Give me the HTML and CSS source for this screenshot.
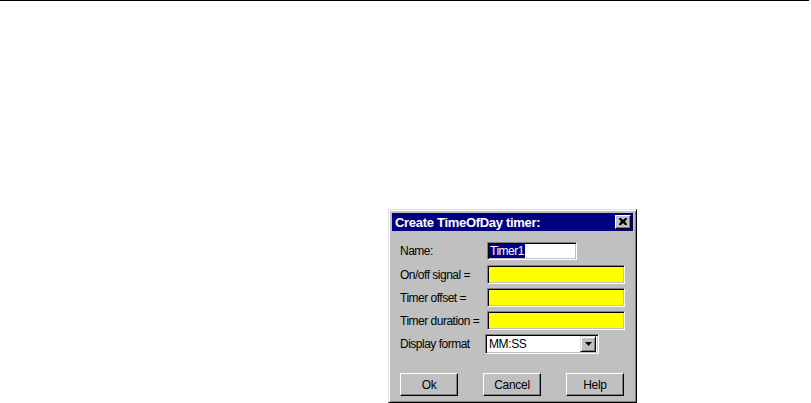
FILE: index.html
```html
<!DOCTYPE html>
<html>
<head>
<meta charset="utf-8">
<link rel="stylesheet" href="styles.css">
</head>
<body>
<div class="topline"></div>
<div class="dialog">
  <div class="titlebar">
    <span class="title">Create TimeOfDay timer:</span>
    <span class="close">
      <svg width="8" height="7" viewBox="0 0 8 7"><path d="M0 0h2l2 2 2-2h2v1L6 3.5 8 6v1H6L4 5 2 7H0V6l2-2.5L0 1z" fill="#000"/></svg>
    </span>
  </div>
  <div class="form">
    <div class="row row-name">
      <span class="label">Name:</span>
      <span class="field name-field"><span class="sel">Timer1</span></span>
    </div>
    <div class="row">
      <span class="label">On/off signal =</span>
      <span class="field yellow"></span>
    </div>
    <div class="row">
      <span class="label">Timer offset =</span>
      <span class="field yellow"></span>
    </div>
    <div class="row">
      <span class="label">Timer duration =</span>
      <span class="field yellow"></span>
    </div>
    <div class="row row-select">
      <span class="label">Display format</span>
      <span class="field select">
        <span class="select-text">MM:SS</span>
        <span class="drop">
          <svg width="7" height="4" viewBox="0 0 7 4"><path d="M0 0h7L3.5 4z" fill="#000"/></svg>
        </span>
      </span>
    </div>
  </div>
  <div class="buttons">
    <span class="btn">Ok</span>
    <span class="btn">Cancel</span>
    <span class="btn">Help</span>
  </div>
</div>
</body>
</html>
```

FILE: styles.css
```css
html, body {
  margin: 0;
  padding: 0;
  background: #fff;
}
body {
  font-family: "Liberation Sans", Arial, sans-serif;
  width: 811px;
  height: 403px;
  overflow: hidden;
}
.topline {
  width: 809px;
  height: 1px;
  background: #000;
}
.dialog {
  box-sizing: border-box;
  margin-left: 388px;
  margin-top: 208px;
  width: 249px;
  height: 194px;
  background: #c0c0c0;
  border: 1px solid;
  border-color: #dfdfdf #000 #000 #dfdfdf;
  box-shadow: inset 1px 1px #fff, inset -1px -1px #808080;
  padding: 3px;
  display: flex;
  flex-direction: column;
}
.titlebar {
  height: 18px;
  background: #000080;
  color: #fff;
  display: flex;
  align-items: center;
  justify-content: space-between;
  padding: 0 2px 0 3px;
}
.title {
  font-weight: bold;
  font-size: 13px;
  letter-spacing: -0.3px;
}
.close {
  box-sizing: border-box;
  width: 16px;
  height: 14px;
  background: #c0c0c0;
  border: 1px solid;
  border-color: #fff #000 #000 #fff;
  box-shadow: inset -1px -1px #808080;
  display: flex;
  align-items: center;
  justify-content: center;
  padding-bottom: 1px;
}
.form {
  margin-top: 11px;
  padding-left: 8px;
  display: flex;
  flex-direction: column;
  gap: 4px;
}
.row {
  display: flex;
  align-items: center;
  height: 19px;
}
.row-name {
  height: 18px;
  margin-bottom: 1px;
}
.row-select {
  height: 20px;
}
.label {
  width: 87px;
  font-size: 12px;
  letter-spacing: -0.5px;
  color: #000;
}
.field {
  box-sizing: border-box;
  height: 100%;
  border: 1px solid;
  border-color: #808080 #fff #fff #808080;
  box-shadow: inset 1px 1px #000, inset -1px -1px #c0c0c0;
  background: #fff;
  display: flex;
  align-items: center;
}
.name-field {
  width: 90px;
  padding: 2px 2px 2px 1px;
}
.sel {
  background: #000080;
  color: #fff;
  font-size: 12px;
  letter-spacing: -0.5px;
  line-height: 14px;
  padding: 0 1px;
}
.yellow {
  width: 138px;
  background: #ffff00;
}
.select {
  width: 114px;
  margin-left: -2px;
  padding: 2px 2px 2px 3px;
  justify-content: space-between;
}
.select-text {
  font-size: 12px;
  letter-spacing: -0.4px;
}
.drop {
  box-sizing: border-box;
  width: 16px;
  height: 16px;
  background: #c0c0c0;
  border: 1px solid;
  border-color: #dfdfdf #000 #000 #dfdfdf;
  box-shadow: inset 1px 1px #fff, inset -1px -1px #808080;
  display: flex;
  align-items: center;
  justify-content: center;
}
.buttons {
  margin-top: 19px;
  padding-left: 8px;
  display: flex;
  gap: 25px;
}
.btn {
  box-sizing: border-box;
  width: 58px;
  height: 23px;
  border: 1px solid;
  border-color: #fff #000 #000 #fff;
  box-shadow: inset -1px -1px #808080;
  background: #c0c0c0;
  font-size: 12px;
  letter-spacing: -0.3px;
  display: flex;
  align-items: center;
  justify-content: center;
  color: #000;
}
```
